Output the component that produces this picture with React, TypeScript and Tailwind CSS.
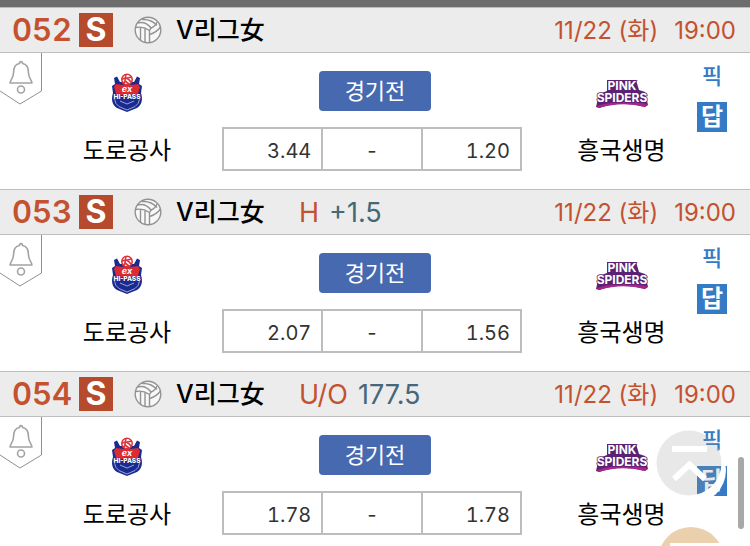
import React from "react";

type Match = {
  no: string;
  kind?: string;
  line?: string;
  home: string;
  away: string;
};

const matches: Match[] = [
  { no: "052", home: "3.44", away: "1.20" },
  { no: "053", kind: "H", line: "+1.5", home: "2.07", away: "1.56" },
  { no: "054", kind: "U/O", line: "177.5", home: "1.78", away: "1.78" },
];

function Volleyball() {
  return (
    <svg viewBox="0 0 28 28" className="h-7 w-7" fill="none" stroke="#929292" strokeWidth="1.4">
      <circle cx="14" cy="14" r="12.8" fill="#f8f8f8" />
      <path d="M3.500 7C9 5.500 14 8 17 12L15.500 14.500C11 11.500 6.500 10.500 2 11.500" />
      <path d="M8 3.500C14 3 19 5 23 9.500" />
      <path d="M15.500 14.500V26.500M11 12.500V26M6.500 11.500V24" />
      <path d="M17 12C20 11 22 8.500 23 6M26.500 11C24 14.500 20.500 17 15.500 18.500" />
    </svg>
  );
}

function HiPassLogo() {
  return (
    <svg viewBox="0 0 32 40" className="h-10 w-8" aria-label="HI-PASS">
      <path d="M3 5L6 3.500L9 9H23L26 3.500L29 5L28 11L31 13L30 20C32 26 31 32 26 35L16 39L6 35C1 32 0 26 2 20L1 13L4 11Z" fill="#1b2a8e" />
      <circle cx="16" cy="6.500" r="5.200" fill="#fff" stroke="#df3138" strokeWidth="1.500" />
      <path d="M11 6.500C14 4 17 5 20 9M15 2C14 5 15 8 12.500 10.500M16 5L21 4M14 8L18 11" fill="none" stroke="#df3138" strokeWidth="1.600" />
      <path d="M5 11Q16 13 27 11L29 14L26.500 22H5.500L3 14Z" fill="#dc2b31" />
      <path d="M3.500 26Q4 31 8 33.500L16 37L24 33.500Q28 31 28.500 26M9 28L16 31L23 28" fill="none" stroke="#98a5d6" strokeWidth="1" />
      <text x="16" y="19" textAnchor="middle" fontFamily="Inter, sans-serif" fontSize="9" fontStyle="italic" fontWeight="700" fill="#fff">ex</text>
      <text x="16" y="26" textAnchor="middle" fontFamily="Inter, sans-serif" fontSize="6.500" fontWeight="800" fill="#fff" stroke="#1b2a8e" strokeWidth="0.600" paintOrder="stroke">HI-PASS</text>
    </svg>
  );
}

function SpidersLogo() {
  return (
    <svg viewBox="0 0 54 40" className="h-10 w-[54px]" aria-label="PINK SPIDERS">
      <path d="M12 7H41L44 17L50 19L53 32L50 34Q27 27 4 35L1 34L4 21L12 18Z" fill="#5b2175" />
      <path d="M2 33Q27 25 52 31L50 34Q27 28 4 35Z" fill="#a8238a" />
      <g textAnchor="middle" fontFamily="Inter, sans-serif" fontWeight="700" fill="#fff" stroke="#5b2175" strokeWidth="1.500" paintOrder="stroke">
        <text x="27" y="17" fontSize="12">PINK</text>
        <text x="27" y="29" fontSize="12">SPIDERS</text>
      </g>
    </svg>
  );
}

function BellTab() {
  return (
    <button type="button" aria-label="알림" className="self-start">
      <svg viewBox="0 0 42 53" className="h-[53px] w-[42px]" fill="none">
        <path d="M0 38L20 51L41.500 38V0" stroke="#8f8f8f" />
        <g stroke="#a3a3a3" strokeWidth="1.600" strokeLinejoin="round">
          <path d="M10 30H32C32 27 28.500 25.500 28.500 20C28.500 14 26 11 22.500 10.500C22.500 8 19.500 8 19.500 10.500C16 11 13.500 14 13.500 20C13.500 25.500 10 27 10 30Z" />
          <circle cx="21" cy="36.500" r="3.500" />
        </g>
      </svg>
    </button>
  );
}

function Team({ name, children }: { name: string; children: React.ReactNode }) {
  return (
    <div className="flex flex-col items-center gap-4 pt-[20px]">
      {children}
      <span className="text-[24px] leading-[44px] whitespace-nowrap text-black">{name}</span>
    </div>
  );
}

function MatchRow({ match }: { match: Match }) {
  return (
    <section>
      <header className="flex h-[46px] items-center border-y border-[#bdbdbd] bg-[#ececec] pr-[14px] pl-3">
        <span className="w-[67px] text-[31px] font-semibold text-[#c4512f] tabular-nums">{match.no}</span>
        <span className="flex h-[34px] w-[34px] items-center justify-center bg-[#b64a2c] text-[32px] font-bold text-white">S</span>
        <span className="ml-[21px]">
          <Volleyball />
        </span>
        <div className="flex flex-1 items-center pt-[2px] pl-[14px]">
          <h2 className="w-[123px] text-[25px] font-medium whitespace-nowrap text-black">V리그女</h2>
          {match.kind && (
            <p className="flex gap-[10px] text-[27px]">
              <span className="text-[#c4512f]">{match.kind}</span>
              <span className="text-[#446879]">{match.line}</span>
            </p>
          )}
          <time className="ml-auto flex gap-4 text-[24px] whitespace-nowrap text-[#c4512f]">
            <span>11/22 (화)</span>
            <span>19:00</span>
          </time>
        </div>
      </header>

      <div className="grid grid-cols-[42px_36fr_300px_35fr_30px] pr-[23px] pb-4">
        <BellTab />
        <div className="pr-[10px]">
          <Team name="도로공사">
            <HiPassLogo />
          </Team>
        </div>
        <div className="flex flex-col gap-4 pt-[18px]">
          <div className="flex justify-center pl-1.5">
            <button type="button" className="h-10 w-28 rounded bg-[#4769b0] text-[22px] text-white">
              경기전
            </button>
          </div>
          <table className="h-11 w-full table-fixed border-collapse text-[20px] text-[#333] tabular-nums">
            <tbody>
              <tr>
                <td className="border-2 border-[#bdbdbd] pt-[3px] pr-[10px] text-right">{match.home}</td>
                <td className="border-2 border-[#bdbdbd] pt-[3px] text-center">-</td>
                <td className="border-2 border-[#bdbdbd] pt-[3px] pr-[10px] text-right">{match.away}</td>
              </tr>
            </tbody>
          </table>
        </div>
        <div className="pl-6">
          <Team name="흥국생명">
            <SpidersLogo />
          </Team>
        </div>
        <div className="flex flex-col items-center gap-[14px] pt-[11px]">
          <a href="#pick" className="text-[22px] leading-6 font-medium text-[#357ac5]">픽</a>
          <a href="#reply" className="flex h-[30px] w-[30px] items-center justify-center bg-[#357ac5] text-[24px] leading-none font-bold text-white">
            답
          </a>
        </div>
      </div>
    </section>
  );
}

export default function App() {
  return (
    <main className="relative h-screen overflow-hidden bg-white font-['Inter','Noto_Sans_CJK_KR',sans-serif]">
      <div className="h-[7px] bg-[#6d6d6d]" />
      {matches.map((m) => (
        <MatchRow key={m.no} match={m} />
      ))}

      {/* floating shortcuts */}
      <button type="button" aria-label="맨 위로" className="absolute right-[20px] bottom-[43px]">
        <svg viewBox="0 0 82 82" className="h-[82px] w-[82px]" fill="none">
          <mask id="rim">
            <rect width="82" height="82" fill="#fff" />
            <circle cx="41" cy="42" r="32.5" fill="#000" />
          </mask>
          <circle cx="44" cy="49" r="34" fill="#fff" mask="url(#rim)" />
          <circle cx="41" cy="42" r="32.5" fill="#969696" fillOpacity="0.22" />
          <path d="M24 28H59M26 58L41.500 43.500L57 58" stroke="#fff" strokeWidth="6" />
        </svg>
      </button>
      <button type="button" aria-label="메뉴" className="absolute right-[26px] -bottom-[47px]">
        <svg viewBox="0 0 66 66" className="h-[66px] w-[66px]">
          <circle cx="33" cy="33" r="33" fill="#ebd0ae" />
          <path d="M12 19H63" stroke="#fff" strokeWidth="6" />
        </svg>
      </button>
      <div className="absolute right-[6px] bottom-[17px] h-[72px] w-[6px] rounded-full bg-[#a8a8a8]" />
    </main>
  );
}
